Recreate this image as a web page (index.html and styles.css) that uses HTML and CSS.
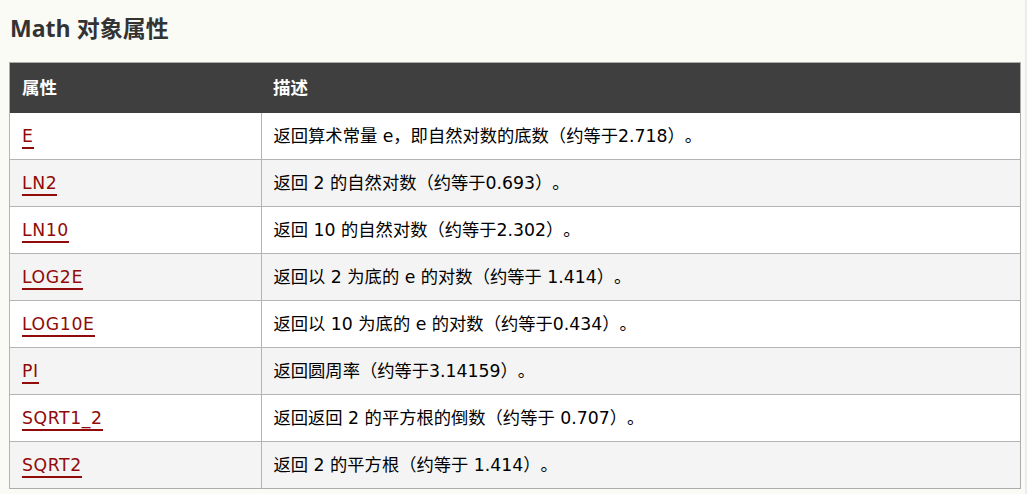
FILE: index.html
```html
<!DOCTYPE html>
<html lang="zh">
<head>
<meta charset="utf-8">
<title>Math 对象属性</title>
<link rel="stylesheet" href="styles.css">
</head>
<body>
<div class="page">
  <h2 class="title">Math 对象属性</h2>
  <table class="props">
    <thead>
      <tr><th class="c1">属性</th><th>描述</th></tr>
    </thead>
    <tbody>
      <tr><td><a href="#">E</a></td><td>返回算术常量 e，即自然对数的底数（约等于2.718）。</td></tr>
      <tr><td><a href="#">LN2</a></td><td>返回 2 的自然对数（约等于0.693）。</td></tr>
      <tr><td><a href="#">LN10</a></td><td>返回 10 的自然对数（约等于2.302）。</td></tr>
      <tr><td><a href="#">LOG2E</a></td><td>返回以 2 为底的 e 的对数（约等于 1.414）。</td></tr>
      <tr><td><a href="#">LOG10E</a></td><td>返回以 10 为底的 e 的对数（约等于0.434）。</td></tr>
      <tr><td><a href="#">PI</a></td><td>返回圆周率（约等于3.14159）。</td></tr>
      <tr><td><a href="#">SQRT1_2</a></td><td>返回返回 2 的平方根的倒数（约等于 0.707）。</td></tr>
      <tr><td><a href="#">SQRT2</a></td><td>返回 2 的平方根（约等于 1.414）。</td></tr>
    </tbody>
  </table>
</div>
</body>
</html>
```

FILE: styles.css
```css
html, body {
  margin: 0;
  padding: 0;
  background: #fbfbf6;
}
body {
  font-family: "DejaVu Sans", "Noto Sans CJK SC", sans-serif;
  color: #000;
  text-spacing-trim: space-all;
}
.page {
  padding: 12px 4px 0 9px;
  border-right: 2px solid #ececec;
  min-height: 482px;
}
.title {
  font-family: "Open Sans", "Noto Sans CJK SC", sans-serif;
  font-size: 23px;
  font-weight: 700;
  line-height: 32px;
  color: #333;
  margin: 0 0 18px 1px;
}
.props {
  width: 1012px;
  border-collapse: collapse;
  border: 1px solid #acacac;
  font-size: 17.3px;
}
.props th {
  background: #3f3f3f;
  color: #fff;
  font-weight: 700;
  text-align: left;
  line-height: 22px;
  padding: 14px 12px;
  font-size: 17.5px;
}
.props th.c1 {
  width: 227px;
}
.props td {
  line-height: 22px;
  padding: 12px 12px;
  border-top: 1px solid #b4b4b4;
  border-left: 1px solid #b4b4b4;
  vertical-align: top;
  background: #fff;
}
.props tbody tr:first-child td {
  border-top: none;
}
.props tbody tr:nth-child(even) td {
  background: #f4f4f4;
}
.props a {
  color: #900b09;
  text-decoration: none;
  letter-spacing: 0.6px;
  border-bottom: 2px solid #900b09;
  padding-bottom: 1px;
}
```
